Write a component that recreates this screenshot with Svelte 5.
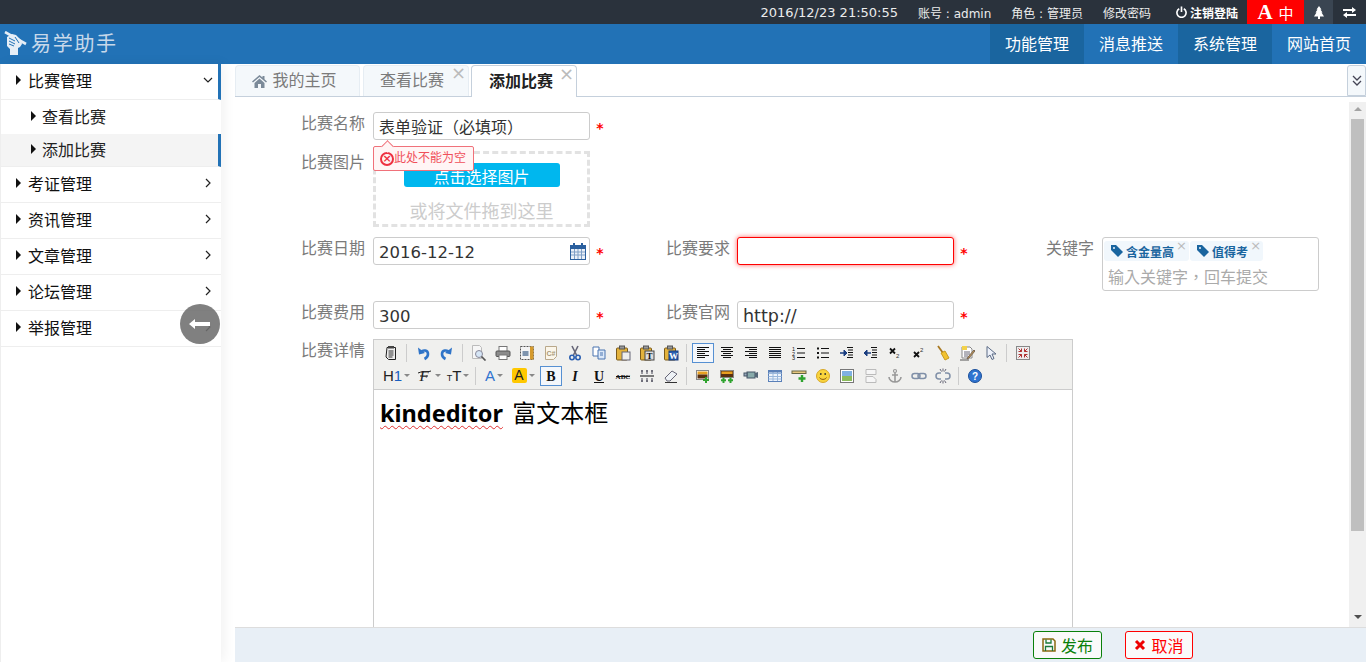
<script>
	const cjk = '"DejaVu Sans", "Noto Sans CJK SC", sans-serif';

	const menu = [
		{ name: '比赛管理', open: true, children: [{ name: '查看比赛' }, { name: '添加比赛', active: true }] },
		{ name: '考证管理' },
		{ name: '资讯管理' },
		{ name: '文章管理' },
		{ name: '论坛管理' },
		{ name: '举报管理' }
	];

	const nav = [
		{ name: '功能管理', dark: true },
		{ name: '消息推送' },
		{ name: '系统管理', dark: true },
		{ name: '网站首页' }
	];

	// small toolbar glyphs, 16x16
	const lines = (rows) =>
		rows.map(([a, b], i) => `<path d="M${a} ${2.5 + i * 2}H${b}" stroke="#111"/>`).join('');
	const glyph = (t, fill = '#111', extra = '') =>
		`<text x="8" y="12.5" text-anchor="middle" font-family="Liberation Serif, serif" font-size="14" font-weight="700" fill="${fill}" ${extra}>${t}</text>`;
	const clip = (badge) =>
		`<rect x="1.5" y="3" width="11" height="12" rx="1" fill="#e3b23c" stroke="#7a5a1a"/><rect x="4.5" y="1" width="5" height="3" fill="#999" stroke="#555"/>${badge}`;

	const icons = {
		source: '<path d="M4 2.500h8.500v12H5.500L3 12z" fill="#eee" stroke="#222"/><path d="M5.500 6h5M5.500 8h5M5.500 10h5M5.500 12h4" stroke="#333"/><rect x="5" y="1" width="6" height="2.500" fill="#444"/>',
		undo: '<path d="M3 2.500l1 7 6-1.500z" fill="#2f74c8"/><path d="M6 7c2-2.500 7-2 7 2 0 2.500-1.500 4-3.500 5" fill="none" stroke="#2f74c8" stroke-width="2.600"/>',
		redo: '<path d="M13 2.500l-1 7-6-1.500z" fill="#2f74c8"/><path d="M10 7C8 4.500 3 5 3 9c0 2.500 1.500 4 3.500 5" fill="none" stroke="#2f74c8" stroke-width="2.600"/>',
		preview: '<path d="M1.500 .5h7l2 2v11h-9z" fill="#f6f6f6" stroke="#bbb"/><circle cx="8" cy="9" r="3.500" fill="#d6e6f6" stroke="#889"/><path d="M10.500 11.500l4 4" stroke="#555" stroke-width="1.700"/>',
		print: '<rect x="4" y="1.500" width="8" height="5" fill="#fff" stroke="#777"/><rect x="1" y="6" width="14" height="5.500" rx="1" fill="#8c8c8c" stroke="#555"/><rect x="4" y="10" width="8" height="4.500" fill="#fff" stroke="#777"/>',
		template: '<rect x="1.500" y="1.500" width="13" height="13" fill="#f4f4f4" stroke="#555" stroke-dasharray="2 1"/><rect x="11" y="1.500" width="3.500" height="13" fill="#d59a2c"/><rect x="3.500" y="6" width="6" height="5" fill="#7d93ad"/>',
		code: '<path d="M2.500 1.500h11v10l-3 3h-8z" fill="#fbf6ea" stroke="#b9a88a"/><text x="8" y="10.500" text-anchor="middle" font-size="7" font-weight="700" font-family="Liberation Sans, sans-serif" fill="#a89878">C#</text>',
		cut: '<path d="M5 1l4.500 9M11 1L6.500 10" stroke="#667" stroke-width="1.600"/><circle cx="5" cy="12.500" r="2.200" fill="none" stroke="#2b5fb0" stroke-width="1.600"/><circle cx="11" cy="12.500" r="2.200" fill="none" stroke="#2b5fb0" stroke-width="1.600"/>',
		copy: '<path d="M2 2h6v9H2z" fill="#fff" stroke="#4a74b0"/><path d="M7 5h7v9H7z" fill="#dbe8f8" stroke="#4a74b0"/><path d="M9 8h3M9 10h3" stroke="#4a74b0"/>',
		paste: clip('<rect x="7" y="7" width="8" height="8" fill="#eee" stroke="#667"/>'),
		pasteText: clip('<rect x="6" y="6" width="9" height="9" fill="#ddd" stroke="#444"/><text x="10.500" y="14" text-anchor="middle" font-size="9" font-weight="700" font-family="Liberation Serif, serif" fill="#111">T</text>'),
		pasteWord: clip('<rect x="6" y="6" width="9" height="9" fill="#2b5fb0" stroke="#1b3f80"/><text x="10.500" y="14" text-anchor="middle" font-size="9" font-weight="700" font-family="Liberation Serif, serif" fill="#fff">W</text>'),
		left: lines([[2, 14], [2, 10], [2, 14], [2, 10], [2, 14], [2, 10]]),
		center: lines([[2, 14], [4, 12], [2, 14], [4, 12], [2, 14], [4, 12]]),
		right: lines([[2, 14], [6, 14], [2, 14], [6, 14], [2, 14], [6, 14]]),
		justify: lines([[2, 14], [2, 14], [2, 14], [2, 14], [2, 14], [2, 14]]),
		ol: '<text x="1" y="6" font-size="5.500" font-family="Liberation Sans, sans-serif" fill="#111">1</text><text x="1" y="10.500" font-size="5.500" font-family="Liberation Sans, sans-serif" fill="#111">2</text><text x="1" y="15" font-size="5.500" font-family="Liberation Sans, sans-serif" fill="#111">3</text><path d="M6 3.500h8M6 8h8M6 12.500h8" stroke="#111"/>',
		ul: '<path d="M2 2.500h2v2H2zM2 7h2v2H2zM2 11.500h2v2H2z" fill="#111"/><path d="M6 3.500h8M6 8h8M6 12.500h8" stroke="#111"/>',
		indent: '<path d="M8 2.500h6M9 5h5M9 7.500h5M9 10h5M8 12.500h6" stroke="#111"/><path d="M1 8h4V5l3 3-3 3V8z" fill="#1b3f80" stroke="#1b3f80"/>',
		outdent: '<path d="M8 2.500h6M9 5h5M9 7.500h5M9 10h5M8 12.500h6" stroke="#111"/><path d="M8 8H4V5L1 8l3 3V8z" fill="#1b3f80" stroke="#1b3f80"/>',
		sub: '<path d="M3 3.500l5 5M8 3.500l-5 5" stroke="#111" stroke-width="1.800"/><text x="9" y="13" font-size="6" font-family="Liberation Sans, sans-serif" fill="#333">2</text>',
		sup: '<path d="M3 7l5 5M8 7l-5 5" stroke="#111" stroke-width="1.800"/><text x="9" y="7" font-size="6" font-family="Liberation Sans, sans-serif" fill="#333">2</text>',
		clear: '<path d="M3 1l5 7" stroke="#a87820" stroke-width="1.800"/><path d="M6 8l4-2 4 7-4 2z" fill="#f2c230" stroke="#c89a20"/>',
		quick: '<path d="M3 2h8l2 2v9H3z" fill="#fff" stroke="#888"/><path d="M3 1h5v4H3z" fill="#f3d24a"/><path d="M5 7h6M5 9h6M5 11h4" stroke="#667"/><path d="M15 5l-6 7-1 2 2-1 6-7z" fill="#c89a50" stroke="#765"/><path d="M1 15h9" stroke="#555"/>',
		select: '<path d="M4 1.500v11l3-2.500 2 4.500 2-1-2-4.500h4z" fill="#eef2fa" stroke="#5a6a85"/>',
		fullscreen: '<rect x="1.500" y="1.500" width="13" height="13" fill="#eee" stroke="#888"/><path d="M3.500 3.500l3 3m0-3v3h-3M12.500 3.500l-3 3m0-3v3h3M3.500 12.500l3-3m0 3v-3h-3M12.500 12.500l-3-3m0 3v-3h3" fill="none" stroke="#b03030"/>',
		font: '<text x="7" y="13" text-anchor="middle" font-family="Liberation Serif, serif" font-style="italic" font-size="15" fill="#222">F</text><path d="M1 5c3-2 9 0 13-2M3 8h8" fill="none" stroke="#222"/>',
		bold: glyph('B'),
		italic: '<text x="8" y="12.500" text-anchor="middle" font-family="Liberation Serif, serif" font-style="italic" font-size="14" font-weight="700" fill="#111">I</text>',
		underline: glyph('U') + '<path d="M3 14.500h10" stroke="#111"/>',
		strike: '<text x="8" y="11" text-anchor="middle" font-family="Liberation Serif, serif" font-size="7" font-weight="700" fill="#111">ABC</text><path d="M1 8.500h14" stroke="#111"/>',
		lineheight: '<path d="M1 8h14" stroke="#555" stroke-width="1.500"/><path d="M3 2v4M8 2v4M13 2v4M3 10v4M8 10v4M13 10v4M2 3h2M7 3h2M12 3h2M2 13h2M7 13h2M12 13h2" stroke="#445"/>',
		eraser: '<path d="M2 10l7-7 5 3-7 7H4z" fill="#eef2f6" stroke="#667"/><path d="M2 14.500h12" stroke="#333"/>',
		image: '<rect x="1.500" y="2.500" width="12" height="9" fill="#fff" stroke="#888"/><rect x="2.500" y="3.500" width="10" height="3" fill="#e8a020"/><rect x="2.500" y="6.500" width="10" height="4" fill="#5a3010"/><path d="M11 9v6M8 12h6" stroke="#2fa32f" stroke-width="2"/>',
		multiimage: '<rect x="1.500" y="2.500" width="13" height="7" fill="#5a3010" stroke="#888"/><rect x="2.500" y="3.500" width="11" height="2.500" fill="#e8a020"/><path d="M4.500 9.500v5.500M2 12.200h5M11.500 9.500v5.500M9 12.200h5" stroke="#2fa32f" stroke-width="2"/>',
		flash: '<rect x="4" y="4" width="8" height="6" fill="#8aa" stroke="#456"/><path d="M12 5l3-1v6l-3-1z" fill="#567"/><rect x="1" y="5" width="3" height="3" fill="#9ab" stroke="#456"/>',
		table: '<rect x="1.500" y="2.500" width="13" height="11" fill="#eef4fc" stroke="#5a80b8"/><path d="M1.500 5.500h13M1.500 8.500h13M1.500 11h13M6 3v10M10.500 3v10" stroke="#9ab8dc"/><path d="M2 3.500h12" stroke="#5a80b8" stroke-width="2"/>',
		hr: '<rect x="1" y="3" width="14" height="2.500" fill="#e8c880" stroke="#664"/><path d="M11 7v7M7.500 10.500h7" stroke="#2fa32f" stroke-width="2.400"/>',
		emoji: '<circle cx="8" cy="8" r="6.500" fill="#f9d43c" stroke="#d8a828"/><circle cx="5.800" cy="6" r=".9" fill="#333"/><circle cx="10.200" cy="6" r=".9" fill="#333"/><path d="M4.500 9.500c1 2.500 6 2.500 7 0" fill="none" stroke="#8a5a10"/>',
		picture: '<rect x="1.500" y="1.500" width="13" height="13" fill="#fff" stroke="#777"/><rect x="3" y="3" width="10" height="5" fill="#7fb0e0"/><rect x="3" y="8" width="10" height="5" fill="#8cbc5c"/>',
		pagebreak: '<path d="M3 1.500h10v5H3zM3 8.500h7l3 3v3H3z" fill="#f6f6f6" stroke="#bbb"/>',
		anchor: '<circle cx="8" cy="3" r="1.500" fill="none" stroke="#999" stroke-width="1.200"/><path d="M8 4.500V14M5 7h6M2 9c0 3 3 5 6 5s6-2 6-5" fill="none" stroke="#999" stroke-width="1.600"/>',
		link: '<rect x="1" y="5.500" width="8" height="5" rx="2.500" fill="none" stroke="#8090a8" stroke-width="1.500"/><rect x="7" y="5.500" width="8" height="5" rx="2.500" fill="none" stroke="#8090a8" stroke-width="1.500"/>',
		unlink: '<path d="M6 5H4a3 3 0 0 0 0 6h2M10 5h2a3 3 0 0 1 0 6h-2" fill="none" stroke="#8090a8" stroke-width="1.500"/><path d="M5 1l1.500 2.500M8 .5v3M11 1L9.500 3.500M5 15l1.500-2.500M8 15.500v-3M11 15l-1.500-2.500" stroke="#667"/>',
		help: '<circle cx="8" cy="8" r="6.500" fill="#2f74d0" stroke="#1b4f9a"/><text x="8" y="11.500" text-anchor="middle" font-size="10" font-weight="700" font-family="Liberation Sans, sans-serif" fill="#fff">?</text>'
	};

	const row1 = [
		['source'], '|', ['undo'], ['redo'], '|', ['preview'], ['print'], ['template'], ['code'], ['cut'], ['copy'],
		['paste'], ['pasteText'], ['pasteWord'], '|', ['left', true], ['center'], ['right'], ['justify'], ['ol'], ['ul'],
		['indent'], ['outdent'], ['sub'], ['sup'], ['clear'], ['quick'], ['select'], '|', ['fullscreen']
	];
	const row2b = [
		['bold', true], ['italic'], ['underline'], ['strike'], ['lineheight'], ['eraser'], '|', ['image'], ['multiimage'],
		['flash'], ['table'], ['hr'], ['emoji'], ['picture'], ['pagebreak'], ['anchor'], ['link'], ['unlink'], '|', ['help']
	];
</script>

<div class="page" style="font-family: {cjk}">
	<div class="topbar">
		<span class="clock">2016/12/23 21:50:55</span>
		<span class="info">账号 : admin</span>
		<span class="info">角色 : 管理员</span>
		<span class="info pwd">修改密码</span>
		<span class="logout">
			<svg width="11" height="12" viewBox="0 0 12 13"><path d="M3.500 3a5 5 0 1 0 5 0M6 .5v6" fill="none" stroke="#fff" stroke-width="1.800"/></svg>
			注销登陆
		</span>
		<span class="lang"><b>A</b>中</span>
		<span class="bell">
			<svg width="10" height="13" viewBox="0 0 10 13"><path d="M5 0l2.500 3.500H6.500l2 3H7.500L10 10.500H6V13H4v-2.500H0l2.500-4h-1l2-3h-1z" fill="#fff"/></svg>
		</span>
		<span class="swap">
			<svg width="13" height="11" viewBox="0 0 13 11"><path d="M0 2h9V0l4 3-4 3V4H0zM13 7H4V5L0 8l4 3V9h9z" fill="#fff"/></svg>
		</span>
	</div>

	<header class="header">
		<div class="brand">
			<svg class="logo" width="23" height="24" viewBox="0 0 23 24">
				<!-- fist holding a pen -->
				<path d="M1 1l21 12" stroke="#e6eef6" stroke-width="2.600"/>
				<path d="M3 6l5-3 4 1 5 5 1 4-2 3-2 1v7H6v-6l-3-3z" fill="#e6eef6"/>
				<path d="M5 7l6 3M5 10l6 3M5 13l5 2M11 6l4 6" stroke="#2272b6" fill="none"/>
			</svg>
			<span>易学助手</span>
		</div>
		<nav class="nav">
			{#each nav as n}
				<span class="nav-item" class:dark={n.dark}>{n.name}</span>
			{/each}
		</nav>
	</header>

	<div class="body">
		<aside class="sidebar">
			{#each menu as m}
				<div class="item" class:open={m.open}>
					<i class="tri"></i>
					<span class="item-name">{m.name}</span>
					<svg class="chev" width="10" height="10" viewBox="0 0 10 10">
						{#if m.open}
							<path d="M1 3l4 4 4-4" fill="none" stroke="#222" stroke-width="1.200"/>
						{:else}
							<path d="M3 1l4 4-4 4" fill="none" stroke="#222" stroke-width="1.200"/>
						{/if}
					</svg>
				</div>
				{#if m.children}
					{#each m.children as c}
						<div class="sub" class:active={c.active}>
							<i class="tri"></i>
							<span>{c.name}</span>
						</div>
					{/each}
				{/if}
			{/each}
			<button class="collapse" aria-label="collapse">
				<svg width="22" height="12" viewBox="0 0 22 12"><path d="M0 6l6-5v3h15v4H6v3z" fill="#fff"/></svg>
			</button>
		</aside>

		<main class="main">
			<div class="tabs">
				<div class="tab home">
					<svg width="15" height="13" viewBox="0 0 15 13"><path d="M7.500 0L0 6.500l1 1 6.500-5.500L14 7.500l1-1-2.500-2.200V1h-2v1.600zM2.500 8v5h3.500V9h3v4h3.500V8L7.500 3.500z" fill="#7b8a99"/></svg>
					我的主页
				</div>
				<div class="tab">查看比赛<span class="close">×</span></div>
				<div class="tab current">添加比赛<span class="close">×</span></div>
				<div class="tab-more">
					<svg width="10" height="11" viewBox="0 0 10 11"><path d="M1 1l4 4 4-4M1 6l4 4 4-4" fill="none" stroke="#445" stroke-width="1.300"/></svg>
				</div>
			</div>

			<div class="scroll-wrap">
				<div class="form">
					<div class="row r-name">
						<label class="lab" for="name">比赛名称</label>
						<div class="field">
							<input id="name" class="input" value="表单验证（必填项）" />
							<div class="tip"><i class="tip-x">×</i>此处不能为空</div>
						</div>
						<span class="star">*</span>
					</div>

					<div class="row r-pic">
						<span class="lab">比赛图片</span>
						<div class="drop">
							<div class="pick">点击选择图片</div>
							<div class="drag">或将文件拖到这里</div>
						</div>
					</div>

					<div class="row r-date">
						<label class="lab" for="date">比赛日期</label>
						<div class="field">
							<input id="date" class="input" value="2016-12-12" />
							<svg class="cal" width="16" height="17" viewBox="0 0 16 17">
								<rect x=".5" y="2.500" width="15" height="14" fill="#eaf0f8" stroke="#2a5f9e"/>
								<rect x="0" y="2" width="16" height="4" fill="#2a5f9e"/>
								<path d="M4 0v4M12 0v4" stroke="#2a5f9e" stroke-width="2"/>
								<path d="M1 9h14M1 12h14M4.500 6v10M8 6v10M11.500 6v10" stroke="#7f9fc6"/>
							</svg>
						</div>
						<span class="star">*</span>
						<label class="lab lab2" for="req">比赛要求</label>
						<input id="req" class="input err" />
						<span class="star">*</span>
						<span class="lab lab3">关键字</span>
						<div class="keywords">
							<div class="tags">
								<span class="tag"><svg width="12" height="12" viewBox="0 0 12 12"><path d="M0 0h5l7 7-5 5-7-7z" fill="#1a659f"/><circle cx="3" cy="3" r="1" fill="#eef5fb"/></svg>含金量高<em>×</em></span>
								<span class="tag"><svg width="12" height="12" viewBox="0 0 12 12"><path d="M0 0h5l7 7-5 5-7-7z" fill="#1a659f"/><circle cx="3" cy="3" r="1" fill="#eef5fb"/></svg>值得考<em>×</em></span>
							</div>
							<div class="kw-hint">输入关键字，回车提交</div>
						</div>
					</div>

					<div class="row r-fee">
						<label class="lab" for="fee">比赛费用</label>
						<input id="fee" class="input" value="300" />
						<span class="star">*</span>
						<label class="lab lab2" for="url">比赛官网</label>
						<input id="url" class="input" value="http://" />
						<span class="star">*</span>
					</div>

					<div class="row r-editor">
						<span class="lab">比赛详情</span>
						<div class="editor">
							<div class="toolbar">
								<div class="tb-row">
									{#each row1 as it}
										{#if it === '|'}
											<i class="sep"></i>
										{:else}
											<span class="ico" class:on={it[1]}><svg width="16" height="16" viewBox="0 0 16 16">{@html icons[it[0]]}</svg></span>
										{/if}
									{/each}
								</div>
								<div class="tb-row">
									<span class="drop-ico wide"><span>H<em>1</em></span><i></i></span>
									<span class="drop-ico font"><svg width="16" height="16" viewBox="0 0 16 16">{@html icons.font}</svg><i></i></span>
									<span class="drop-ico size"><small>T</small>T<i></i></span>
									<i class="sep"></i>
									<span class="drop-ico color">A<i></i></span>
									<span class="drop-ico hl"><b>A</b><i></i></span>
									{#each row2b as it}
										{#if it === '|'}
											<i class="sep"></i>
										{:else}
											<span class="ico" class:on={it[1]}><svg width="16" height="16" viewBox="0 0 16 16">{@html icons[it[0]]}</svg></span>
										{/if}
									{/each}
								</div>
							</div>
							<div class="content"><strong>kindeditor</strong> 富文本框</div>
						</div>
					</div>
				</div>

				<div class="scrollbar">
					<span class="sb-arrow up"></span>
					<div class="thumb"></div>
					<span class="sb-arrow down"></span>
				</div>
			</div>

			<footer class="footer">
				<button class="btn ok">
					<svg width="14" height="14" viewBox="0 0 14 14"><path d="M1 1h10l2 2v10H1z" fill="none" stroke="#8a6a10" stroke-width="1.500"/><path d="M4 1.500v3.500h5V1.500M3.500 13V8.500h7V13" fill="none" stroke="#1a7a3a" stroke-width="1.300"/></svg>
					发布
				</button>
				<button class="btn no">
					<svg width="12" height="12" viewBox="0 0 12 12"><path d="M2 2l8 8M10 2l-8 8" stroke="#e00" stroke-width="3"/></svg>
					取消
				</button>
			</footer>
		</main>
	</div>
</div>

<style>
	:global(body) {
		margin: 0;
		overflow: hidden;
		background: #fff;
	}

	.page {
		height: 662px;
		display: flex;
		flex-direction: column;
		overflow: hidden;
	}

	/* top strip */
	.topbar {
		height: 24px;
		flex: none;
		background: #2a323c;
		color: #ececec;
		font-size: 12px;
		display: flex;
		align-items: center;
		justify-content: flex-end;
	}

	.clock {
		font-size: 13px;
		margin-right: 20px;
	}

	.info {
		margin-right: 20px;
	}

	.info.pwd {
		margin-right: 25px;
	}

	.logout {
		display: flex;
		align-items: center;
		gap: 3px;
		color: #fff;
		font-weight: 700;
		margin-right: 9px;
	}

	.lang {
		width: 57px;
		height: 24px;
		background: #f00;
		color: #fff;
		font-size: 15px;
		display: flex;
		align-items: center;
		justify-content: center;
		gap: 6px;
	}

	.lang b {
		font-family: "Liberation Serif", serif;
		font-size: 21px;
		line-height: 24px;
	}

	.bell,
	.swap {
		height: 24px;
		display: flex;
		align-items: center;
		justify-content: center;
	}

	.bell {
		width: 29px;
		background: #3a4552;
	}

	.swap {
		width: 33px;
	}

	/* main header */
	.header {
		height: 40px;
		flex: none;
		background: #2272b6;
		display: flex;
		justify-content: space-between;
	}

	.brand {
		display: flex;
		align-items: center;
		padding-left: 4px;
		color: #c8d9ea;
		font-size: 20px;
		letter-spacing: 1.700px;
		line-height: 44px;
	}

	.logo {
		margin-right: 4px;
		margin-top: -3px;
	}

	.nav {
		display: flex;
	}

	.nav-item {
		width: 94px;
		color: #fff;
		font-size: 16px;
		line-height: 41px;
		text-align: center;
	}

	.nav-item.dark {
		background: #1a659f;
	}

	.body {
		flex: 1;
		display: flex;
		min-height: 0;
	}

	/* left menu */
	.sidebar {
		width: 220px;
		flex: none;
		position: relative;
		border-left: 1px solid #eee;
		box-shadow: 3px 0 12px rgba(0, 0, 0, 0.06);
		background: #fff;
		color: #111;
	}

	.item {
		height: 32px;
		padding: 0 0 3px 15px;
		display: flex;
		align-items: center;
		font-size: 16px;
		border-bottom: 1px solid #eee;
	}

	.item.open {
		border-right: 3px solid #2272b6;
	}

	.tri {
		width: 0;
		height: 0;
		border-left: 5px solid #111;
		border-top: 5px solid transparent;
		border-bottom: 5px solid transparent;
		margin-right: 7px;
	}

	.item-name {
		flex: 1;
	}

	.chev {
		margin-right: 8px;
	}

	.item.open .chev {
		margin-right: 5px;
	}

	.sub {
		height: 32px;
		padding: 0 0 2px 30px;
		display: flex;
		align-items: center;
		font-size: 16px;
		color: #222;
	}

	.sub .tri {
		margin-right: 6px;
	}

	.sub.active {
		height: 30px;
		background: #f4f4f4;
		border-right: 3px solid #2272b6;
		border-bottom: 1px solid #eee;
	}

	.collapse {
		position: absolute;
		left: 179px;
		top: 240px;
		width: 40px;
		height: 40px;
		border: 0;
		border-radius: 50%;
		background: rgba(110, 110, 110, 0.88);
		padding: 0;
		display: flex;
		align-items: center;
		justify-content: center;
	}

	/* tabs + form */
	.main {
		flex: 1;
		margin-left: 14px;
		min-width: 0;
		display: flex;
		flex-direction: column;
	}

	.tabs {
		height: 33px;
		flex: none;
		box-sizing: border-box;
		display: flex;
		align-items: flex-end;
		border-bottom: 1px solid #c5d0dc;
		font-size: 16px;
		position: relative;
	}

	.tab {
		height: 31px;
		width: 106px;
		box-sizing: border-box;
		background: #f4f8fb;
		color: #7b7b7b;
		line-height: 30px;
		text-align: center;
		position: relative;
		margin-right: 2px;
		border: 1px solid #e6edf3;
		border-bottom: 0;
		border-radius: 4px 4px 0 0;
		padding-right: 8px;
	}

	.tab.home {
		width: 125px;
		margin-right: 3px;
		padding-right: 6px;
		display: flex;
		align-items: center;
		justify-content: center;
		gap: 5px;
	}

	.tab.current {
		height: 32px;
		margin-bottom: -1px;
		background: #fff;
		color: #222;
		font-weight: 700;
		line-height: 32px;
		border-color: #c5d0dc;
		padding-right: 6px;
	}

	.close {
		position: absolute;
		right: 2px;
		top: -8px;
		color: #bbb;
		font-size: 18px;
		font-weight: 400;
	}

	.tab-more {
		position: absolute;
		right: 0;
		top: 1px;
		width: 19px;
		height: 31px;
		box-sizing: border-box;
		border: 1px solid #c5d0dc;
		border-radius: 3px 3px 0 0;
		background: #f4f8fb;
		display: flex;
		align-items: center;
		justify-content: center;
	}

	.scroll-wrap {
		flex: 1;
		min-height: 0;
		display: flex;
		padding-top: 5px;
		overflow: hidden;
	}

	.form {
		flex: 1;
		min-width: 0;
		padding-top: 10px;
		color: #7b7b7b;
		font-size: 16px;
	}

	.row {
		display: flex;
		align-items: flex-start;
	}

	.r-name,
	.r-fee {
		height: 28px;
	}

	.lab {
		width: 130px;
		flex: none;
		text-align: right;
		margin-right: 8px;
		line-height: 23px;
	}

	.lab2 {
		width: 109px;
		margin-left: 11px;
		margin-right: 7px;
	}

	.lab3 {
		width: 89px;
		margin-left: 31px;
		margin-right: 8px;
	}

	.field {
		position: relative;
	}

	.input {
		display: block;
		width: 217px;
		height: 28px;
		box-sizing: border-box;
		border: 1px solid #ccc;
		border-radius: 3px;
		padding: 3px 5px 1px;
		font: inherit;
		font-size: 16.500px;
		color: #333;
		outline: 0;
		background: #fff;
	}

	#name {
		font-family: "Noto Sans CJK TC", sans-serif;
		font-size: 16px;
		padding: 2px 5px;
	}

	#url {
		font-size: 17.500px;
	}

	.input.err {
		border-color: #f00;
		box-shadow: 0 0 5px rgba(255, 0, 0, 0.6);
	}

	.star {
		width: 20px;
		flex: none;
		color: #f00;
		text-align: center;
		font-size: 14px;
		line-height: 33px;
		font-weight: 700;
	}

	.tip {
		position: absolute;
		left: 0;
		top: 34px;
		width: 101px;
		height: 25px;
		box-sizing: border-box;
		border: 1px solid #f0717a;
		border-radius: 2px;
		background: #fff5f5;
		color: #f0505a;
		font-size: 12px;
		line-height: 23px;
		display: flex;
		align-items: center;
		padding-left: 6px;
		z-index: 2;
	}

	.tip::before {
		content: '';
		position: absolute;
		left: 9px;
		top: -5px;
		width: 8px;
		height: 8px;
		background: #fff5f5;
		border-left: 1px solid #f0717a;
		border-top: 1px solid #f0717a;
		transform: rotate(45deg);
	}

	.tip-x {
		width: 10px;
		height: 10px;
		border: 2px solid #ee3040;
		border-radius: 50%;
		color: #ee3040;
		font-style: normal;
		font-weight: 700;
		font-size: 11px;
		line-height: 10px;
		text-align: center;
		flex: none;
	}

	.r-pic {
		margin-top: 11px;
	}

	.drop {
		width: 217px;
		height: 76px;
		box-sizing: border-box;
		border: 3px dashed #e2e2e2;
		display: flex;
		flex-direction: column;
		align-items: center;
		padding-top: 9px;
	}

	.pick {
		width: 156px;
		height: 25px;
		background: #00b7ee;
		border-radius: 3px;
		color: #fff;
		font-size: 16px;
		line-height: 29px;
		text-align: center;
		overflow: hidden;
	}

	.drag {
		margin-top: 13px;
		font-size: 18px;
		line-height: 24px;
		color: #ccc;
	}

	.r-date {
		margin-top: 10px;
		height: 54px;
	}

	.cal {
		position: absolute;
		right: 4px;
		top: 6px;
	}

	.keywords {
		width: 217px;
		height: 54px;
		box-sizing: border-box;
		border: 1px solid #ccc;
		border-radius: 3px;
		padding: 3px 1px;
	}

	.tags {
		display: flex;
		gap: 1px;
		height: 24px;
	}

	.tag {
		display: flex;
		align-items: center;
		gap: 3px;
		height: 20px;
		padding: 0 15px 0 7px;
		background: #f1f7fc;
		border-radius: 3px;
		color: #1a659f;
		font-size: 12px;
		font-weight: 700;
		position: relative;
	}

	.tag em {
		position: absolute;
		right: 2px;
		top: -3px;
		color: #bbb;
		font-style: normal;
		font-weight: 400;
		font-size: 13px;
	}

	.kw-hint {
		padding-left: 4px;
		font-family: "Noto Sans CJK TC", sans-serif;
		color: #aaa;
		font-size: 16px;
		line-height: 23px;
	}

	.r-fee {
		margin-top: 10px;
	}

	.r-editor {
		margin-top: 10px;
	}

	.editor {
		width: 700px;
		height: 420px;
		box-sizing: border-box;
		border: 1px solid #ccc;
		flex: none;
		background: #fff;
	}

	.toolbar {
		background: #f0f0ee;
		border-bottom: 1px solid #ccc;
		height: 50px;
		padding: 1px 0 0 5px;
		box-sizing: border-box;
	}

	.tb-row {
		display: flex;
		align-items: center;
		height: 23px;
	}

	.ico {
		width: 22px;
		height: 20px;
		margin: 0 1px;
		box-sizing: border-box;
		display: flex;
		align-items: center;
		justify-content: center;
		flex: none;
	}

	.ico.on {
		border: 1px solid #5690d2;
		background: #f4f7fb;
	}

	.sep {
		width: 1px;
		height: 18px;
		background: #ccc;
		margin: 0 4px 0 3px;
		flex: none;
	}

	.drop-ico {
		height: 20px;
		display: flex;
		align-items: center;
		justify-content: center;
		font-family: "Liberation Sans", sans-serif;
		font-size: 15px;
		color: #222;
		flex: none;
		gap: 2px;
	}

	.drop-ico em {
		color: #1a5fc0;
		font-style: normal;
	}

	.drop-ico i {
		width: 0;
		height: 0;
		border-top: 3px solid #888;
		border-left: 3px solid transparent;
		border-right: 3px solid transparent;
	}

	.drop-ico.wide {
		width: 35px;
	}

	.drop-ico.font {
		width: 30px;
	}

	.drop-ico.size {
		width: 28px;
	}

	.drop-ico small {
		font-size: 9px;
		margin-top: 4px;
		margin-right: -2px;
	}

	.drop-ico.color {
		width: 28px;
		color: #2f74d0;
	}

	.drop-ico.hl {
		width: 30px;
		margin-right: 1px;
	}

	.drop-ico.hl b {
		width: 15px;
		height: 15px;
		background: #ffc800;
		border-radius: 2px;
		font-weight: 400;
		font-size: 14px;
		line-height: 15px;
		text-align: center;
	}

	.content {
		padding: 7px 6px;
		color: #000;
		font-family: "Noto Sans", "Noto Sans CJK SC", sans-serif;
		font-size: 24px;
		line-height: 32px;
		word-spacing: 3px;
	}

	.content strong {
		font-size: 23.500px;
		text-decoration: underline wavy #e03030 1px;
		text-underline-offset: 3px;
		text-decoration-skip-ink: none;
	}

	.scrollbar {
		width: 17px;
		flex: none;
		background: #f0f0f0;
		display: flex;
		flex-direction: column;
		align-items: center;
		position: relative;
	}

	.thumb {
		width: 13px;
		height: 412px;
		background: #bfbfbf;
		margin-top: 8px;
	}

	.sb-arrow {
		width: 0;
		height: 0;
		border-left: 4px solid transparent;
		border-right: 4px solid transparent;
		margin-top: 5px;
	}

	.sb-arrow.up {
		border-bottom: 4px solid #a3a3a3;
	}

	.sb-arrow.down {
		border-top: 4px solid #505050;
		position: absolute;
		bottom: 8px;
	}

	.footer {
		height: 35px;
		flex: none;
		box-sizing: border-box;
		border-top: 1px solid #ddd;
		background: #e8eff6;
		display: flex;
		align-items: center;
		padding-left: 798px;
		gap: 23px;
	}

	.btn {
		height: 28px;
		width: 69px;
		box-sizing: border-box;
		background: #fafafa;
		border-radius: 3px;
		font: inherit;
		font-size: 16px;
		display: flex;
		align-items: center;
		justify-content: center;
		gap: 5px;
		padding: 0;
	}

	.btn.ok {
		border: 1px solid #0a800a;
		color: #0a800a;
	}

	.btn.no {
		width: 68px;
		border: 1px solid #f00;
		color: #f00;
	}
</style>
